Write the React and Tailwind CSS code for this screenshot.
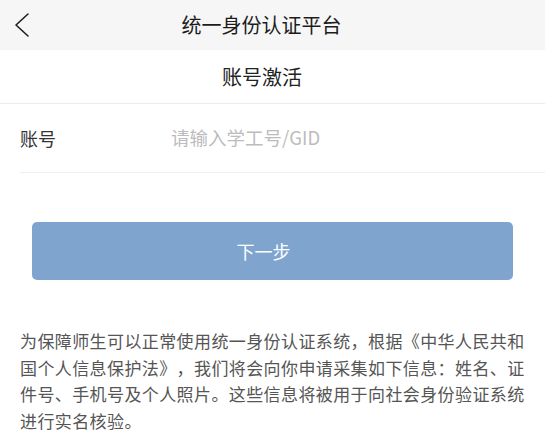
const cjk = { fontFamily: '"Noto Sans CJK SC", "Noto Sans", sans-serif' };

export default function App() {
  return (
    <div className="w-[545px] h-[439px] bg-white overflow-hidden [text-spacing-trim:space-all]" style={cjk}>
      {/* top bar */}
      <div className="h-[50px] bg-[#f6f6f6] flex items-center">
        <div className="w-[44px] flex items-center pl-[14px]">
          <svg width="16" height="26" viewBox="0 0 16 26" fill="none" stroke="#1e1e1e" strokeWidth="1.6" strokeLinecap="round" strokeLinejoin="round">
            <polyline points="14,2 2,13 14,24" />
          </svg>
        </div>
        <div className="flex-1 text-center text-[20px] text-[#1c1c1c] leading-none">
          统一身份认证平台
        </div>
        <div className="w-[66px]" />
      </div>

      <div className="h-[54px] flex items-center justify-center pr-[21px] border-b border-[#ededed] text-[20px] text-[#222]">
        账号激活
      </div>

      <div className="ml-5 h-[69px] flex items-center border-b border-[#efefef]">
        <label className="w-[151px] text-[18px] text-[#333]">账号</label>
        <input
          type="text"
          placeholder="请输入学工号/GID"
          className="flex-1 text-[18.5px] outline-none bg-transparent placeholder:text-[#bcbcbc]"
        />
      </div>

      <div className="px-8 pt-[49px]">
        <button className="w-full h-[58px] rounded-[5px] bg-[#7fa5cf] text-white text-[18px] flex items-center justify-center pr-[18px]">
          下一步
        </button>
      </div>

      <p className="pl-5 pr-4 pt-[48px] text-[17px] tracking-[0.4px] leading-[26.5px] text-[#555]">
        为保障师生可以正常使用统一身份认证系统，根据《中华人民共和国个人信息保护法》，我们将会向你申请采集如下信息：姓名、证件号、手机号及个人照片。这些信息将被用于向社会身份验证系统进行实名核验。
      </p>
    </div>
  );
}
